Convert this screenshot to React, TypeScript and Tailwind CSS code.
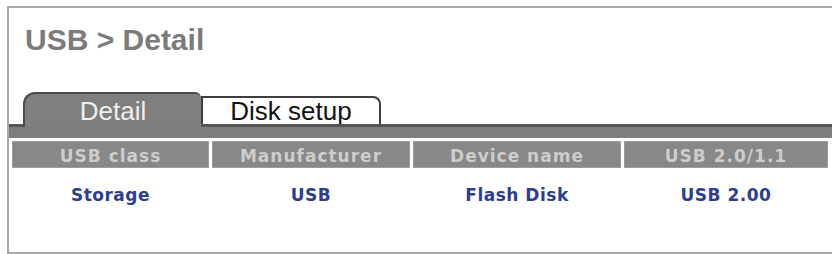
import React from "react";

const cols = [
  { h: "USB class", v: "Storage" },
  { h: "Manufacturer", v: "USB" },
  { h: "Device name", v: "Flash Disk" },
  { h: "USB 2.0/1.1", v: "USB 2.00" },
];

export default function App() {
  return (
    <div className="w-[832px] h-[254px] bg-white pt-[6px] pl-[7px] overflow-hidden">
      <div className="h-[248px] border-t-2 border-l-2 border-b-2 border-[#a9a9a9] flex flex-col">
        <div className="pl-[16px] pt-[17px] text-[30px] leading-[30px] font-bold text-[#7b7b7b] font-['Liberation_Sans',Arial,sans-serif] whitespace-nowrap">
          USB &gt; Detail
        </div>
        <div className="mt-[37px] h-[32px] flex items-start pl-[14px] font-['Liberation_Sans',Arial,sans-serif] text-[26px] leading-[26px]">
          <div className="relative z-10 w-[178px] h-[35px] bg-[#7f7f7f] border-t-2 border-l-2 border-[#4a4a4a] rounded-tl-[12px] rounded-tr-[6px] pt-[4px] text-center text-[#efefef]">
            Detail
          </div>
          <div className="mt-[4px] w-[180px] h-[28px] bg-white border-t-2 border-l-2 border-r-2 border-[#3f3f3f] rounded-tr-[8px] text-center text-[#111]">
            Disk setup
          </div>
        </div>
        <div className="h-[14px] border-t-[3px] border-[#555] bg-[#7d7d7d]" />
        <div className="mt-[3px] pl-[3px] grid grid-cols-[197px_198px_208px_204px] gap-x-[3px] font-['DejaVu_Sans',Verdana,sans-serif] font-bold text-[17px] leading-[20px]">
          {cols.map((c) => (
            <div
              key={c.h}
              className="h-[27px] bg-[#888888] border border-[#9c9c9c] pt-[4px] text-center text-[#cdcdcd] tracking-[1px] whitespace-nowrap"
            >
              {c.h}
            </div>
          ))}
          {cols.map((c) => (
            <div
              key={c.v}
              className="pt-[17px] text-center text-[#2d3e8c] tracking-[0.5px] whitespace-nowrap"
            >
              {c.v}
            </div>
          ))}
        </div>
      </div>
    </div>
  );
}
